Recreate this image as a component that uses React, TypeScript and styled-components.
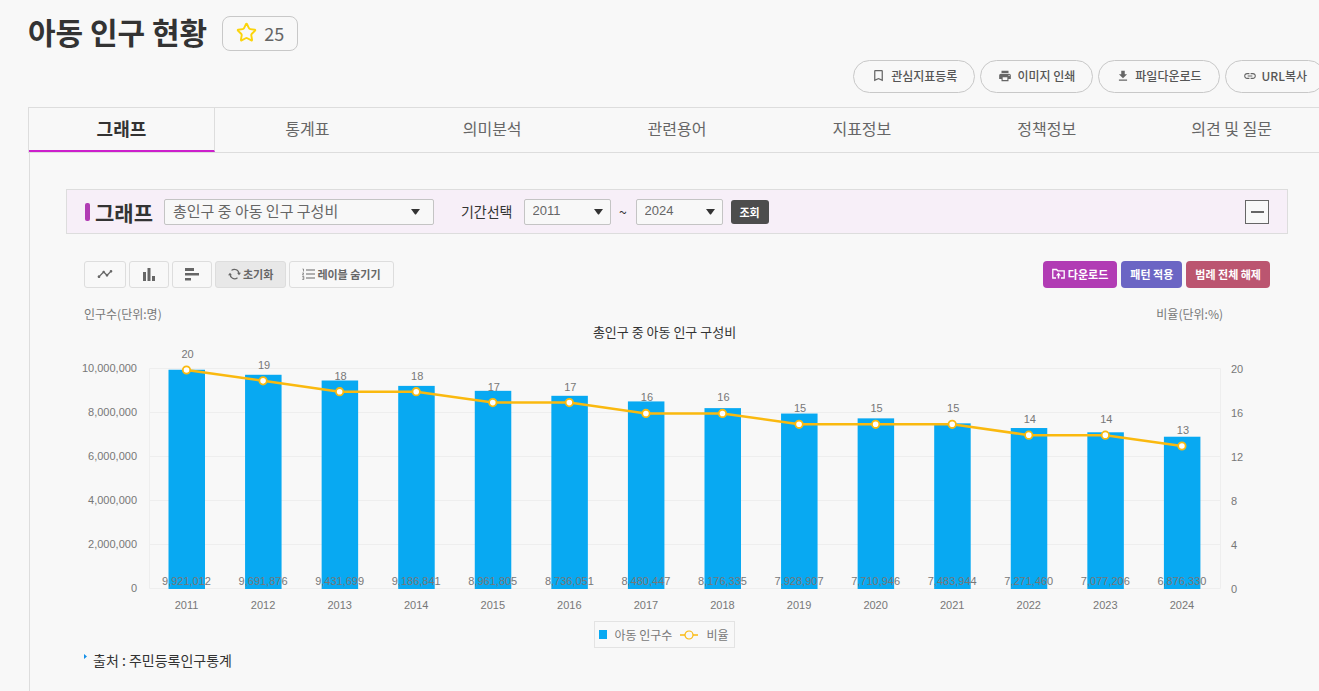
import React from 'react';
import styled, { createGlobalStyle, css } from 'styled-components';
import { Star } from 'lucide-react';
import { MdBookmarkBorder, MdPrint, MdFileDownload, MdLink, MdTimeline } from 'react-icons/md';

const GlobalStyle = createGlobalStyle`
  * { box-sizing: border-box; }
  body {
    margin: 0;
    background: #f8f8f8;
    color: #333;
    overflow-x: hidden;
    font-family: "Noto Sans CJK KR", sans-serif;
    font-size: 14px;
  }
  button, select { font-family: inherit; margin: 0; cursor: pointer; }
`;

const Page = styled.main`
  margin: 0 -6px 0 28px;
  padding-top: 14px;
`;

const TitleRow = styled.header`
  display: flex;
  align-items: center;
  gap: 15px;
  height: 38px;
`;

const Title = styled.h1`
  margin: 0;
  padding-bottom: 4px;
  font-size: 30px;
  line-height: 34px;
  font-weight: 700;
`;

const StarButton = styled.button`
  display: flex;
  align-items: center;
  justify-content: center;
  gap: 7px;
  width: 76px;
  height: 35px;
  padding: 0 0 1px;
  border: 1px solid #c8c8c8;
  border-radius: 8px;
  background: #f8f8f8;
  color: #666;
  font-size: 18px;
`;

const PillRow = styled.div`
  display: flex;
  justify-content: flex-end;
  gap: 5px;
  margin-top: 8px;
`;

const Pill = styled.button`
  display: flex;
  align-items: center;
  gap: 5px;
  height: 33px;
  padding: 0 17px 2px;
  border: 1px solid #c8c8c8;
  border-radius: 17px;
  background: #f8f8f8;
  color: #555;
  font-size: 12px;
  font-weight: 500;
  white-space: nowrap;
  svg { color: #666; }
`;

const Tabs = styled.nav`
  display: flex;
  height: 46px;
  margin-top: 14px;
  border: 1px solid #ddd;
`;

const Tab = styled.a<{ $active?: boolean }>`
  flex: 1;
  line-height: 41px;
  text-align: center;
  text-decoration: none;
  font-size: 16px;
  color: #666;
  ${(p) =>
    p.$active &&
    css`
      color: #333;
      font-size: 18px;
      font-weight: 700;
      border-right: 1px solid #ddd;
      border-bottom: 2px solid #cc1fcc;
    `}
`;

const Panel = styled.section`
  margin-left: 1px;
  padding: 36px 37px 32px 36px;
  border-left: 1px solid #ddd;
`;

const FilterBar = styled.div`
  display: flex;
  align-items: center;
  height: 45px;
  padding: 0 18px;
  border: 1px solid #ddd;
  background: #f7eff8;
`;

const FilterTitle = styled.h2`
  display: flex;
  align-items: center;
  gap: 5px;
  margin: 0 11px 0 0;
  font-size: 21px;
  line-height: 30px;
  font-weight: 700;
  white-space: nowrap;
  &::before {
    content: "";
    width: 5px;
    height: 18px;
    border-radius: 2px;
    background: #b13cb4;
  }
`;

const SelectBox = styled.div<{ $width: number }>`
  display: grid;
  align-items: center;
  width: ${(p) => p.$width}px;
  & > * { grid-area: 1 / 1; }
  svg { justify-self: end; pointer-events: none; margin-right: ${(p) => (p.$width > 100 ? 14 : 8)}px; }
`;

const Select = styled.select<{ $large?: boolean }>`
  appearance: none;
  width: 100%;
  height: 26px;
  padding: 0 8px 1px;
  border: 1px solid #c4c4c4;
  border-radius: 2px;
  background: #f8f8f8;
  color: #666;
  font-family: ${(p) => (p.$large ? 'inherit' : '"Liberation Sans", Arial, sans-serif')};
  font-size: ${(p) => (p.$large ? 15 : 13)}px;
  line-height: 22px;
`;

const PeriodLabel = styled.label`
  margin: 0 11px 0 27px;
  padding-bottom: 2px;
  font-size: 14px;
`;

const Tilde = styled.span`
  width: 25px;
  text-align: center;
`;

const SearchButton = styled.button`
  width: 38px;
  height: 24px;
  margin-left: 8px;
  padding: 0;
  border: 0;
  border-radius: 3px;
  background: #4d4d4d;
  color: #fff;
  font-size: 11px;
  font-weight: 700;
`;

const CollapseButton = styled.button`
  display: grid;
  place-items: center;
  width: 24px;
  height: 24px;
  margin-left: auto;
  padding: 0;
  border: 1px solid #666;
  background: #f8f8f8;
`;

const Minus = styled.span`
  width: 13px;
  height: 2px;
  background: #666;
`;

const ChartArea = styled.div`
  padding: 27px 18px 0;
`;

const Toolbar = styled.div`
  display: flex;
  gap: 3px;
`;

const ToolButton = styled.button<{ $filled?: boolean }>`
  display: flex;
  align-items: center;
  justify-content: center;
  gap: 2px;
  min-width: 40px;
  height: 27px;
  padding: 0 12px 1px;
  border: 1px solid #ddd;
  border-radius: 3px;
  background: ${(p) => (p.$filled ? '#e8e8e8' : '#f8f8f8')};
  color: #666;
  font-size: 11px;
  font-weight: 700;
  white-space: nowrap;
`;

const ColorButtons = styled.div`
  display: flex;
  gap: 4px;
  margin-left: auto;
`;

const ColorButton = styled.button<{ $color: string }>`
  display: flex;
  align-items: center;
  gap: 3px;
  height: 27px;
  padding: 0 9px 1px;
  border: 0;
  border-radius: 4px;
  background: ${(p) => p.$color};
  color: #fff;
  font-size: 11px;
  font-weight: 700;
  white-space: nowrap;
`;

const Units = styled.div`
  display: flex;
  justify-content: space-between;
  margin-top: 17px;
  padding-right: 47px;
  color: #777;
  font-size: 12px;
  line-height: 18px;
`;

const ChartTitle = styled.h3`
  margin: 0 25px 1px 0;
  text-align: center;
  font-size: 13px;
  line-height: 17px;
  font-weight: 400;
`;

const Chart = styled.svg`
  display: block;
  width: 100%;
  height: auto;
  overflow: visible;
  font-family: "Liberation Sans", Arial, sans-serif;
  font-size: 11px;
  fill: #777;
`;

const Legend = styled.div`
  display: flex;
  align-items: center;
  gap: 8px;
  width: max-content;
  height: 27px;
  margin: 0 auto;
  padding: 0 6px 0 4px;
  border: 1px solid #e3e3e3;
  color: #777;
  font-size: 12px;
`;

const LegendRow = styled.div`
  padding-right: 25px;
`;

const Swatch = styled.span`
  width: 8px;
  height: 9px;
  background: #08a9f2;
`;

const Source = styled.p`
  display: flex;
  align-items: flex-start;
  gap: 6px;
  margin: 2px 0 0;
  font-size: 14px;
  line-height: 20px;
  svg { margin-top: 4px; }
`;

const Caret = () => (
  <svg width="9" height="6" viewBox="0 0 9 6" aria-hidden="true">
    <path d="M0 0h9L5.3 5q-.8 1-1.6 0z" fill="#333" />
  </svg>
);

const ColumnsIcon = () => (
  <svg width="14" height="14" viewBox="0 0 14 14" fill="#666" aria-hidden="true">
    <path d="M1 5h3v9H1zM5.500 1h3v13h-3zM10 9h3v5h-3z" />
  </svg>
);

const RowsIcon = () => (
  <svg width="14" height="14" viewBox="0 0 14 14" fill="#666" aria-hidden="true">
    <path d="M0 1h9v3H0zM0 6h14v2.500H0zM0 11h6v2.500H0z" />
  </svg>
);

const ResetIcon = () => (
  <svg width="13" height="12" viewBox="0 0 13 12" fill="none" stroke="#666" aria-hidden="true">
    <path d="M3.500 2.400A4.600 4.600 0 0 1 11 6M9.500 9.800A4.600 4.600 0 0 1 2 6" strokeWidth="1.200" />
    <path d="M9 4.800h4L11 7.200zM0 7.200h4L2 4.800z" fill="#666" stroke="none" />
  </svg>
);

const NumberListIcon = () => (
  <svg width="13" height="12" viewBox="0 0 13 12" fill="none" stroke="#666" aria-hidden="true">
    <path d="M4 2h9M4 6h9M4 10h9" strokeWidth="1.200" />
    <path d="M.5 1h1v2.500M.3 5h1.400L.5 7h1.400M.3 8.500h1.500v3H.3M.5 10h1" strokeWidth=".7" />
  </svg>
);

const FolderIcon = () => (
  <svg width="13" height="12" viewBox="0 0 13 12" fill="none" stroke="#fff" aria-hidden="true">
    <path d="M4 10H.8V1.500h3.700l1.300 1.300h6.400V10H9" strokeWidth="1.300" />
    <path d="M6.500 10.500V6.500" strokeWidth="1.500" />
    <path d="M4 7.500l2.500-3 2.500 3z" fill="#fff" stroke="none" />
  </svg>
);

const data = [
  { year: 2011, count: 9921012, rate: 20 },
  { year: 2012, count: 9691876, rate: 19 },
  { year: 2013, count: 9431699, rate: 18 },
  { year: 2014, count: 9186841, rate: 18 },
  { year: 2015, count: 8961805, rate: 17 },
  { year: 2016, count: 8736051, rate: 17 },
  { year: 2017, count: 8480447, rate: 16 },
  { year: 2018, count: 8176335, rate: 16 },
  { year: 2019, count: 7928907, rate: 15 },
  { year: 2020, count: 7710946, rate: 15 },
  { year: 2021, count: 7483944, rate: 15 },
  { year: 2022, count: 7271460, rate: 14 },
  { year: 2023, count: 7077206, rate: 14 },
  { year: 2024, count: 6876330, rate: 13 },
];

const PLOT = { left: 65.5, right: 1136.5, top: 27.5, bottom: 247.5 };
const centerX = (i: number) => 102.5 + i * 76.57;
const rateY = (rate: number) => 29 + (20 - rate) * 10.86;

function PopulationChart() {
  return (
    <Chart viewBox="0 0 1186 280" role="img" aria-label="총인구 중 아동 인구 구성비">
      {[0, 1, 2, 3, 4, 5].map((i) => {
        const y = PLOT.bottom - i * 44;
        return (
          <g key={i}>
            <line x1={PLOT.left} x2={PLOT.right} y1={y} y2={y} stroke="#eee" />
            <text x="53" y={y + 3} textAnchor="end">{(i * 2000000).toLocaleString('en-US')}</text>
            <text x="1147" y={y + 4}>{i * 4}</text>
          </g>
        );
      })}
      <path d={`M${PLOT.left} ${PLOT.top}V${PLOT.bottom}M${PLOT.right} ${PLOT.top}V${PLOT.bottom}`} stroke="#eee" />
      {data.map((d, i) => {
        const height = (d.count / 10000000) * 220 + 1;
        return <rect key={d.year} x={centerX(i) - 18} y={248 - height} width="36.500" height={height} fill="#08a9f2" />;
      })}
      <polyline
        points={data.map((d, i) => `${centerX(i)},${rateY(d.rate)}`).join(' ')}
        fill="none"
        stroke="#fab90f"
        strokeWidth="2.500"
      />
      {data.map((d, i) => (
        <g key={d.year} textAnchor="middle">
          <circle cx={centerX(i)} cy={rateY(d.rate)} r="3.700" fill="#fff" stroke="#fab90f" strokeWidth="1.800" />
          <text x={centerX(i) + 1} y={rateY(d.rate) - 12}>{d.rate}</text>
          <text x={centerX(i)} y="244">{d.count.toLocaleString('en-US')}</text>
          <text x={centerX(i)} y="268">{d.year}</text>
        </g>
      ))}
    </Chart>
  );
}

const tabs = ['그래프', '통계표', '의미분석', '관련용어', '지표정보', '정책정보', '의견 및 질문'];

export default function App() {
  return (
    <>
      <GlobalStyle />
      <Page>
        <TitleRow>
          <Title>아동 인구 현황</Title>
          <StarButton type="button" aria-label="즐겨찾기 25">
            <Star size={21} color="#fbd40b" strokeWidth={2.2} />
            25
          </StarButton>
        </TitleRow>
        <PillRow>
          <Pill type="button"><MdBookmarkBorder size={15} />관심지표등록</Pill>
          <Pill type="button"><MdPrint size={14} />이미지 인쇄</Pill>
          <Pill type="button"><MdFileDownload size={14} />파일다운로드</Pill>
          <Pill type="button"><MdLink size={14} />URL복사</Pill>
        </PillRow>
        <Tabs>
          {tabs.map((name, i) => (
            <Tab key={name} href="#" $active={i === 0}>{name}</Tab>
          ))}
        </Tabs>
        <Panel>
          <FilterBar>
            <FilterTitle>그래프</FilterTitle>
            <SelectBox $width={270}>
              <Select $large aria-label="지표 선택"><option>총인구 중 아동 인구 구성비</option></Select>
              <Caret />
            </SelectBox>
            <PeriodLabel htmlFor="from">기간선택</PeriodLabel>
            <SelectBox $width={87}>
              <Select id="from" defaultValue={2011}>{data.map((d) => <option key={d.year}>{d.year}</option>)}</Select>
              <Caret />
            </SelectBox>
            <Tilde>~</Tilde>
            <SelectBox $width={87}>
              <Select aria-label="종료 연도" defaultValue={2024}>{data.map((d) => <option key={d.year}>{d.year}</option>)}</Select>
              <Caret />
            </SelectBox>
            <SearchButton type="button">조회</SearchButton>
            <CollapseButton type="button" aria-label="접기"><Minus /></CollapseButton>
          </FilterBar>
          <ChartArea>
            <Toolbar>
              <ToolButton type="button" aria-label="선 그래프"><MdTimeline size={16} /></ToolButton>
              <ToolButton type="button" aria-label="세로 막대"><ColumnsIcon /></ToolButton>
              <ToolButton type="button" aria-label="가로 막대"><RowsIcon /></ToolButton>
              <ToolButton type="button" $filled><ResetIcon />초기화</ToolButton>
              <ToolButton type="button"><NumberListIcon />레이블 숨기기</ToolButton>
              <ColorButtons>
                <ColorButton type="button" $color="#b13cb4"><FolderIcon />다운로드</ColorButton>
                <ColorButton type="button" $color="#6b65c4">패턴 적용</ColorButton>
                <ColorButton type="button" $color="#bb5570">범례 전체 해제</ColorButton>
              </ColorButtons>
            </Toolbar>
            <Units><span>인구수(단위:명)</span><span>비율(단위:%)</span></Units>
            <ChartTitle>총인구 중 아동 인구 구성비</ChartTitle>
            <PopulationChart />
            <LegendRow>
              <Legend>
                <Swatch />
                <span>아동 인구수</span>
                <svg width="18" height="10" viewBox="0 0 18 10" fill="none" stroke="#fab90f" aria-hidden="true">
                  <path d="M0 5h5M13 5h5" strokeWidth="1.500" />
                  <circle cx="9" cy="5" r="4" strokeWidth="1.200" />
                </svg>
                <span>비율</span>
              </Legend>
            </LegendRow>
            <Source>
              <svg width="3" height="5" viewBox="0 0 3 5" aria-hidden="true"><path d="M0 0l3 2.500L0 5z" fill="#1590e8" /></svg>
              출처 : 주민등록인구통계
            </Source>
          </ChartArea>
        </Panel>
      </Page>
    </>
  );
}
